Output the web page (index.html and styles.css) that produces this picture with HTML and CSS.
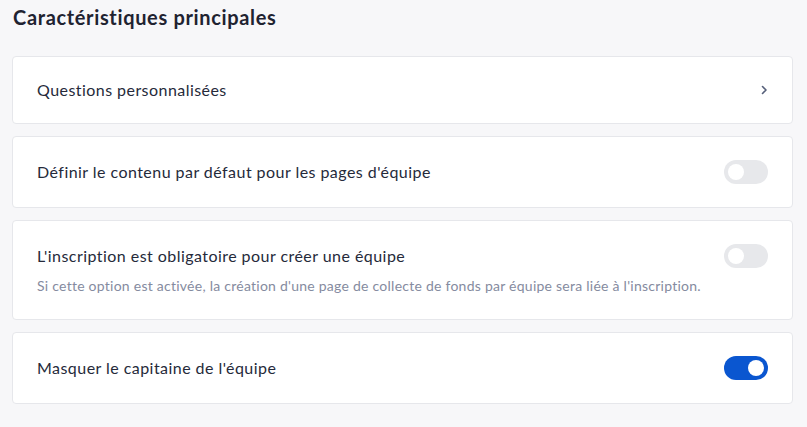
FILE: index.html
```html
<!DOCTYPE html>
<html lang="fr">
<head>
<meta charset="utf-8">
<link rel="stylesheet" href="styles.css">
</head>
<body>
<main class="page">
  <h2 class="title">Caractéristiques principales</h2>
  <div class="list">
    <div class="card link">
      <div class="text"><div class="label">Questions personnalisées</div></div>
      <svg class="chev" width="8" height="10" viewBox="0 0 8 10"><path d="M2.5 1.5 L6 5 L2.5 8.5" fill="none" stroke="#56607a" stroke-width="1.6" stroke-linecap="round" stroke-linejoin="round"/></svg>
    </div>
    <div class="card">
      <div class="text"><div class="label">Définir le contenu par défaut pour les pages d'équipe</div></div>
      <span class="toggle"><span class="knob"></span></span>
    </div>
    <div class="card top">
      <div class="text">
        <div class="label">L'inscription est obligatoire pour créer une équipe</div>
        <div class="desc">Si cette option est activée, la création d'une page de collecte de fonds par équipe sera liée à l'inscription.</div>
      </div>
      <span class="toggle"><span class="knob"></span></span>
    </div>
    <div class="card">
      <div class="text"><div class="label">Masquer le capitaine de l'équipe</div></div>
      <span class="toggle on"><span class="knob"></span></span>
    </div>
  </div>
</main>
</body>
</html>
```
FILE: styles.css
```css
html, body {
  margin: 0;
  padding: 0;
  background: #f7f7f9;
}
body {
  font-family: Lato, "Open Sans", sans-serif;
  color: #252a3a;
}
.page {
  padding: 0 14px 0 12px;
}
.title {
  margin: 0;
  padding: 4px 0 0 1px;
  height: 56px;
  box-sizing: border-box;
  font-size: 20px;
  line-height: 26px;
  font-weight: 700;
  letter-spacing: 0.65px;
  color: #1f2331;
}
.list {
  display: flex;
  flex-direction: column;
  gap: 12px;
}
.card {
  background: #fff;
  border: 1px solid #e6e7eb;
  border-radius: 4px;
  padding: 23px 24px;
  display: flex;
  align-items: center;
  justify-content: space-between;
}
.card.top {
  align-items: flex-start;
}
.label {
  font-size: 16px;
  line-height: 20px;
  letter-spacing: 0.45px;
  padding: 2px 0;
}
.card.link .label {
  padding: 0;
}
.desc {
  margin-top: 8px;
  font-size: 14px;
  line-height: 20px;
  letter-spacing: 0.25px;
  color: #858ba0;
}
.chev {
  display: block;
  margin-right: 0;
}
.toggle {
  flex: none;
  width: 44px;
  height: 24px;
  border-radius: 12px;
  background: #e7e8eb;
  display: flex;
  align-items: center;
  padding: 0 4px;
  box-sizing: border-box;
}
.knob {
  width: 16px;
  height: 16px;
  border-radius: 50%;
  background: #fff;
}
.toggle.on {
  background: #0a56d0;
  justify-content: flex-end;
}
```
